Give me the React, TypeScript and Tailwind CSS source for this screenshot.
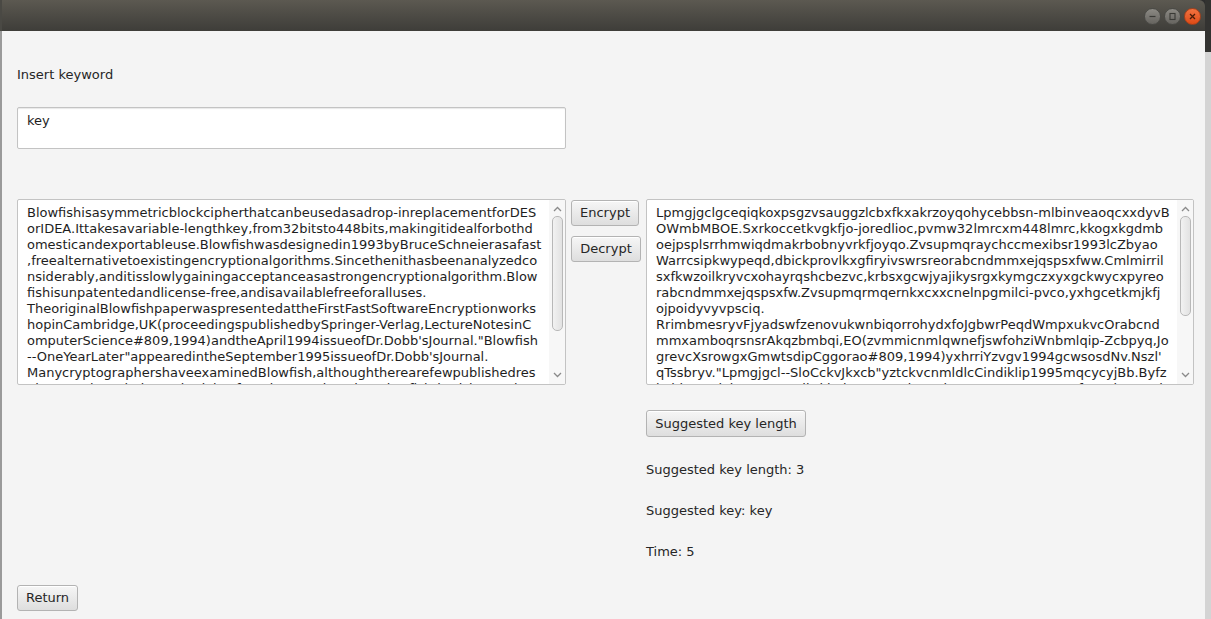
import React from "react";

const leftLines = [
  "Blowfishisasymmetricblockcipherthatcanbeusedasadrop-inreplacementforDES",
  "orIDEA.Ittakesavariable-lengthkey,from32bitsto448bits,makingitidealforbothd",
  "omesticandexportableuse.Blowfishwasdesignedin1993byBruceSchneierasafast",
  ",freealternativetoexistingencryptionalgorithms.Sincethenithasbeenanalyzedco",
  "nsiderably,anditisslowlygainingacceptanceasastrongencryptionalgorithm.Blow",
  "fishisunpatentedandlicense-free,andisavailablefreeforalluses.",
  "TheoriginalBlowfishpaperwaspresentedattheFirstFastSoftwareEncryptionworks",
  "hopinCambridge,UK(proceedingspublishedbySpringer-Verlag,LectureNotesinC",
  "omputerScience#809,1994)andtheApril1994issueofDr.Dobb'sJournal.\"Blowfish",
  "--OneYearLater\"appearedintheSeptember1995issueofDr.Dobb'sJournal.",
  "ManycryptographershaveexaminedBlowfish,althoughtherearefewpublishedres",
  "ults.Toourknowledge,nobodyhasfoundanattackagainstBlowfishthatisbetterthan",
];

const rightLines = [
  "Lpmgjgclgceqiqkoxpsgzvsauggzlcbxfkxakrzoyqohycebbsn-mlbinveaoqcxxdyvB",
  "OWmbMBOE.Sxrkoccetkvgkfjo-joredlioc,pvmw32lmrcxm448lmrc,kkogxkgdmb",
  "oejpsplsrrhmwiqdmakrbobnyvrkfjoyqo.Zvsupmqraychccmexibsr1993lcZbyao",
  "Warrcsipkwypeqd,dbickprovlkxgfiryivswrsreorabcndmmxejqspsxfww.Cmlmirril",
  "sxfkwzoilkryvcxohayrqshcbezvc,krbsxgcwjyajikysrgxkymgczxyxgckwycxpyreo",
  "rabcndmmxejqspsxfw.Zvsupmqrmqernkxcxxcnelnpgmilci-pvco,yxhgcetkmjkfj",
  "ojpoidyvyvpsciq.",
  "RrimbmesryvFjyadswfzenovukwnbiqorrohydxfoJgbwrPeqdWmpxukvcOrabcnd",
  "mmxamboqrsnsrAkqzbmbqi,EO(zvmmicnmlqwnefjswfohziWnbmlqip-Zcbpyq,Jo",
  "grevcXsrowgxGmwtsdipCggorao#809,1994)yxhrriYzvgv1994gcwsosdNv.Nszl'",
  "qTssbryv.\"Lpmgjgcl--SloCckvJkxcb\"yztckvcnmldlcCindiklip1995mqcycyjBb.Byfz",
  "kxbkmqwjvbsxqAzrmojhrkhvkzcexw,pduqqvbqcmogmwcpqosnsrfyeoxkoBnszl",
];

const font = { fontFamily: '"DejaVu Sans", "Liberation Sans", sans-serif' };

function Btn({ children, className = "" }: { children: React.ReactNode; className?: string }) {
  return (
    <div
      className={
        "flex h-[26px] items-center justify-center rounded-[3px] border border-[#b3b3b3] bg-gradient-to-b from-[#f6f6f6] to-[#dedede] px-[8px] text-[13px] text-[#262626] shadow-[inset_0_1px_0_#ffffff] " +
        className
      }
    >
      {children}
    </div>
  );
}

function Chevron({ up }: { up?: boolean }) {
  return (
    <svg width="9" height="6" viewBox="0 0 9 6" className="block">
      <path
        d={up ? "M1 5 L4.5 1.5 L8 5" : "M1 1 L4.5 4.5 L8 1"}
        fill="none"
        stroke="#8a8a8a"
        strokeWidth="1.3"
      />
    </svg>
  );
}

function TextArea({ lines, thumbH }: { lines: string[]; thumbH: number }) {
  return (
    <div className="flex h-[186px] w-full overflow-hidden rounded-[2px] border border-[#c3c3c3] bg-white">
      <div className="flex-1 overflow-hidden pl-[9px] pt-[5px]">
        {lines.map((l, i) => (
          <div key={i} className="h-[16px] whitespace-pre text-[13px] leading-[16px] text-[#1e1e1e]">
            {l}
          </div>
        ))}
      </div>
      <div className="flex w-[16px] flex-col items-center bg-[#f7f7f7] pt-[3px]">
        <div className="flex h-[12px] items-center justify-center">
          <Chevron up />
        </div>
        <div
          className="mt-[1px] w-[11px] rounded-[5px] border border-[#b8b8b8] bg-gradient-to-r from-[#f2f2f2] to-[#e2e2e2]"
          style={{ height: thumbH }}
        />
        <div className="flex-1" />
        <div className="mb-[3px] flex h-[12px] items-center justify-center">
          <Chevron />
        </div>
      </div>
    </div>
  );
}

function WinBtn({ kind }: { kind: "min" | "max" | "close" }) {
  const isClose = kind === "close";
  return (
    <div
      className={
        "flex h-[17px] w-[17px] items-center justify-center rounded-full border " +
        (isClose
          ? "border-[#a8401a] bg-gradient-to-b from-[#f2723f] to-[#dd4a14]"
          : "border-[#4a4a46] bg-gradient-to-b from-[#8c8a84] to-[#66645f]")
      }
    >
      <svg width="9" height="9" viewBox="0 0 9 9">
        {kind === "min" && <path d="M1.5 4.5 H7.5" stroke="#3a3a36" strokeWidth="1.2" />}
        {kind === "max" && <rect x="2" y="1.5" width="5" height="6" fill="none" stroke="#3a3a36" strokeWidth="1.1" />}
        {kind === "close" && <path d="M2 2 L7 7 M7 2 L2 7" stroke="#4a1c08" strokeWidth="1.3" />}
      </svg>
    </div>
  );
}

export default function App() {
  return (
    <div className="flex h-[619px] w-[1211px] overflow-hidden bg-[#2e2e2e]" style={font}>
      <div className="flex w-[2px] flex-col">
        <div className="h-[31px] bg-[#4a4944]" />
        <div className="flex-1 bg-[#9a9a9a]" />
      </div>
      <div className="flex flex-1 flex-col">
        {/* title bar */}
        <div className="flex h-[31px] items-center justify-end gap-[3px] rounded-tr-[6px] bg-gradient-to-b from-[#5c5951] to-[#3e3d39] pr-[4px] pt-[1px]">
          <WinBtn kind="min" />
          <WinBtn kind="max" />
          <WinBtn kind="close" />
        </div>
        {/* content */}
        <div className="flex flex-1 flex-col bg-[#f4f4f4] pl-[15px] pt-[36px]">
          <div className="h-[16px] text-[13px] leading-[16px] text-[#262626]">Insert keyword</div>
          <div className="mt-[24px] h-[42px] w-[549px] rounded-[2px] border border-[#c3c3c3] bg-white pl-[9px] pt-[5px] shadow-[inset_0_1px_1px_#e8e8e8]">
            <div className="text-[13px] leading-[16px] text-[#1e1e1e]">key</div>
          </div>
          <div className="mt-[50px] flex">
            <div className="w-[549px]">
              <TextArea lines={leftLines} thumbH={115} />
            </div>
            <div className="ml-[5px] flex w-[75px] flex-col gap-[10px] pt-[1px]">
              <Btn className="w-[68px]">Encrypt</Btn>
              <Btn className="w-[70px]">Decrypt</Btn>
            </div>
            <div className="flex w-[548px] flex-col">
              <TextArea lines={rightLines} thumbH={100} />
              <Btn className="mt-[25px] h-[27px] w-[160px] self-start">Suggested key length</Btn>
              <div className="mt-[25px] h-[16px] text-[13px] leading-[16px] text-[#262626]">Suggested key length: 3</div>
              <div className="mt-[25px] h-[16px] text-[13px] leading-[16px] text-[#262626]">Suggested key: key</div>
              <div className="mt-[25px] h-[16px] text-[13px] leading-[16px] text-[#262626]">Time: 5</div>
            </div>
          </div>
          <div className="mt-[25px] flex">
            <Btn className="w-[61px]">Return</Btn>
          </div>
        </div>
      </div>
      <div className="flex w-[6px] flex-col">
        <div className="h-[52px] bg-[#333331]" />
        <div className="flex-1 bg-[#d4d4d4]" />
      </div>
    </div>
  );
}
